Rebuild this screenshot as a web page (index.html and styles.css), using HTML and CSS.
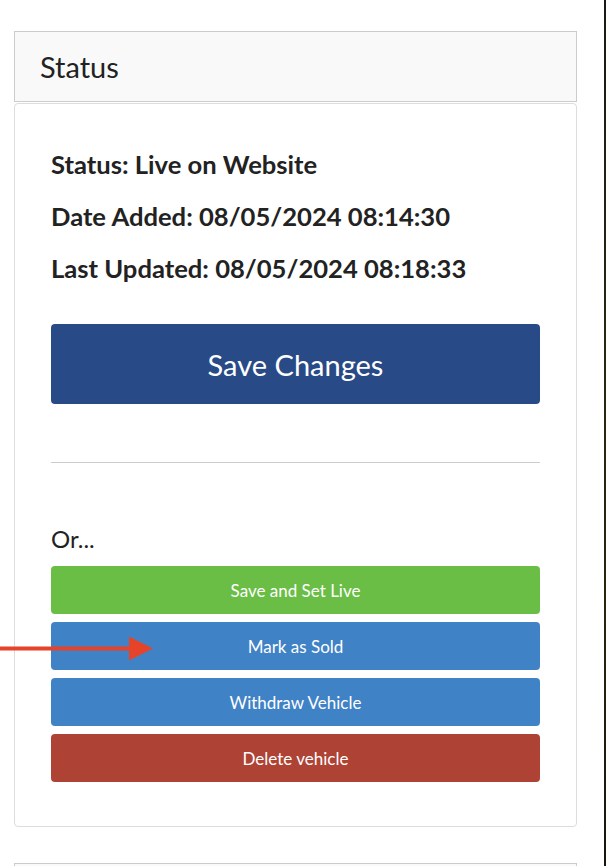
FILE: index.html
```html
<!DOCTYPE html>
<html lang="en">
<head>
<meta charset="utf-8">
<title>Status</title>
<link rel="stylesheet" href="styles.css">
</head>
<body>
<div class="page">
  <main class="column">
    <div class="panel-heading">Status</div>
    <section class="panel-body">
      <div class="info">
        <p class="info-line">Status: Live on Website</p>
        <p class="info-line">Date Added: 08/05/2024 08:14:30</p>
        <p class="info-line">Last Updated: 08/05/2024 08:18:33</p>
      </div>
      <button class="btn btn-save">Save Changes</button>
      <hr class="divider">
      <p class="or">Or...</p>
      <div class="actions">
        <button class="btn btn-small btn-green">Save and Set Live</button>
        <div class="with-arrow">
          <button class="btn btn-small btn-blue">Mark as Sold</button>
          <svg class="arrow" width="156" height="26" viewBox="0 0 156 26" aria-hidden="true">
            <rect x="0" y="10.5" width="132" height="4" fill="#e5432a"/>
            <polygon points="129,0.5 153,12.5 129,24.5" fill="#e5432a"/>
          </svg>
        </div>
        <button class="btn btn-small btn-blue">Withdraw Vehicle</button>
        <button class="btn btn-small btn-red">Delete vehicle</button>
      </div>
    </section>
    <div class="panel-heading next"></div>
  </main>
  <div class="edge"></div>
</div>
</body>
</html>
```

FILE: styles.css
```css
* { box-sizing: border-box; }

html, body {
  margin: 0;
  padding: 0;
  height: 100%;
  overflow: hidden;
  background: #ffffff;
}

body {
  font-family: Lato, "Open Sans", "Liberation Sans", sans-serif;
  color: #222222;
}

.page {
  display: flex;
  height: 866px;
}

.column {
  flex: 1;
  padding: 31px 27px 0 14px;
  position: relative;
}

.edge {
  width: 2px;
  background: linear-gradient(#1b1a12, #2a2414 40%, #2b2210 70%, #1a140c);
}

.panel-heading {
  height: 71px;
  border: 1px solid #cccccc;
  background: #f9f9f9;
  font-size: 29px;
  line-height: 69px;
  padding-left: 25px;
  color: #222222;
}

.panel-body {
  margin-top: 1px;
  border: 1px solid #dddddd;
  border-radius: 4px;
  padding: 34px 36px 44px 36px;
  height: 724px;
}

.info-line {
  margin: 0;
  font-size: 25.6px;
  font-weight: 700;
  line-height: 52px;
}

.btn {
  display: block;
  width: 100%;
  border: none;
  border-radius: 4px;
  color: #ffffff;
  font-family: Lato, "Open Sans", "Liberation Sans", sans-serif;
  text-align: center;
  padding: 0;
}

.btn-save {
  margin-top: 30px;
  height: 80px;
  background: #284a86;
  font-size: 29px;
}

.divider {
  margin: 58px 0 0 0;
  border: none;
  border-top: 1px solid #cccccc;
  height: 0;
}

.or {
  margin: 61px 0 0 0;
  font-size: 24px;
  line-height: 30px;
  height: 42px;
}

.actions {
  display: flex;
  flex-direction: column;
  gap: 8px;
}

.btn-small {
  height: 48px;
  font-size: 17px;
}

.btn-green { background: #6abd45; }
.btn-blue { background: #4082c6; }
.btn-red { background: #ae4335; }

.with-arrow {
  position: relative;
}

.arrow {
  position: absolute;
  left: -51px;
  top: 14px;
}

.panel-heading.next {
  margin-top: 36px;
}
```
